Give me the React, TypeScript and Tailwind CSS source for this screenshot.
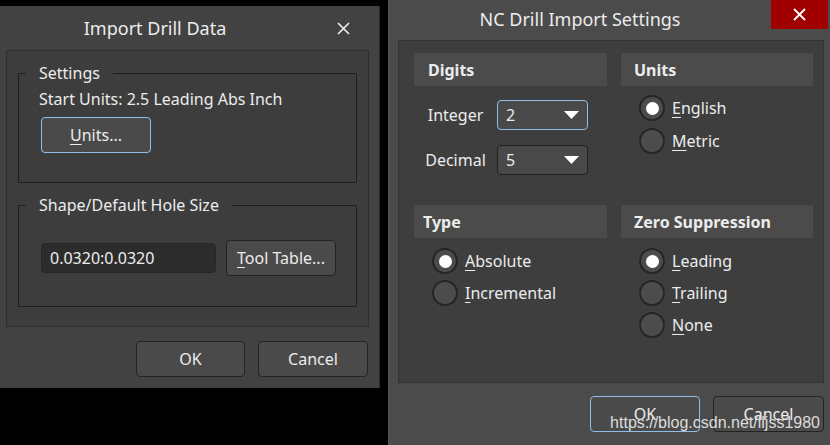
import React from 'react';

const font = { fontFamily: '"Noto Sans", "Open Sans", sans-serif' };

function Btn({ children, w, focus }: { children: React.ReactNode; w: string; focus?: boolean }) {
  return (
    <button
      className={`${w} h-[36px] rounded-[4px] bg-[#4a4a4a] text-[16px] text-[#ececec] border ${
        focus ? 'border-[#8fbde6]' : 'border-[#232323]'
      }`}
    >
      {children}
    </button>
  );
}

// mnemonic: first letter underlined
function Mn({ k, rest }: { k: string; rest: string }) {
  return (
    <span>
      <span className="underline underline-offset-[3px]">{k}</span>
      {rest}
    </span>
  );
}

function Radio({ checked, k, rest }: { checked?: boolean; k: string; rest: string }) {
  return (
    <div className="flex items-center gap-[7px] h-[26px]">
      <span className="w-[26px] h-[26px] rounded-full border-2 border-[#252525] bg-[#4c4c4c] flex items-center justify-center">
        {checked && <span className="w-[13px] h-[13px] rounded-full bg-white" />}
      </span>
      <span className="text-[16px] leading-[22px]">
        <Mn k={k} rest={rest} />
      </span>
    </div>
  );
}

function Dropdown({ value, focus }: { value: string; focus?: boolean }) {
  return (
    <div
      className={`w-[91px] h-[30px] rounded-[4px] bg-[#494949] border flex items-center justify-between pl-[8px] pr-[8px] ${
        focus ? 'border-[#8fbde6]' : 'border-[#222]'
      }`}
    >
      <span className="text-[16px]">{value}</span>
      <svg width="15" height="8" viewBox="0 0 15 8">
        <path d="M0 0 L15 0 L7.5 8 Z" fill="#fff" />
      </svg>
    </div>
  );
}

function Header({ title, pl }: { title: string; pl: string }) {
  return (
    <div className={`h-[33px] bg-[#4b4b4b] flex items-center ${pl} font-bold text-[16px]`}>{title}</div>
  );
}

function ImportDrillData() {
  return (
    <div className="mt-[6px] w-[380px] h-[382px] bg-[#424242] border-r border-[#2c2c2c] flex flex-col">
      <div className="h-[44px] flex items-center">
        <span className="w-[310px] text-center text-[18px]">Import Drill Data</span>
        <svg className="ml-[27px]" width="13" height="13" viewBox="0 0 13 13">
          <path d="M1 1 L12 12 M12 1 L1 12" stroke="#f0f0f0" strokeWidth="1.6" />
        </svg>
      </div>
      <div className="ml-[6px] w-[363px] h-[277px] bg-[#3d3d3d] border border-[#2e2e2e] pl-[11px] flex flex-col">
        <fieldset className="mt-[11px] w-[339px] h-[121px] border border-[#1f1f1f] pl-[20px]">
          <legend className="-ml-[13px] px-[13px] text-[16px] leading-[22px]">Settings</legend>
          <div className="text-[16px] leading-[22px] mt-[4px]">Start Units: 2.5 Leading Abs Inch</div>
          <div className="mt-[7px] pl-[2px]">
            <Btn w="w-[110px]" focus>
              <Mn k="U" rest="nits..." />
            </Btn>
          </div>
        </fieldset>
        <fieldset className="mt-[11px] w-[339px] h-[113px] border border-[#1f1f1f] pl-[22px]">
          <legend className="-ml-[15px] px-[13px] text-[16px] leading-[22px]">Shape/Default Hole Size</legend>
          <div className="mt-[24px] flex items-center gap-[10px]">
            <div className="w-[175px] h-[30px] rounded-[4px] bg-[#2c2c2c] border border-[#262626] flex items-center pl-[8px] text-[16px]">
              0.0320:0.0320
            </div>
            <Btn w="w-[110px]">
              <Mn k="T" rest="ool Table..." />
            </Btn>
          </div>
        </fieldset>
      </div>
      <div className="mt-[14px] flex justify-end gap-[13px] pr-[11px]">
        <Btn w="w-[109px]">OK</Btn>
        <Btn w="w-[110px]">Cancel</Btn>
      </div>
    </div>
  );
}

function NCDrillImportSettings() {
  return (
    <div className="w-[442px] h-[445px] bg-[#4b4b4b] border-l border-[#555] flex flex-col">
      <div className="h-[40px] flex items-start">
        <span className="flex-1 text-center text-[18px] pt-[6px]">NC Drill Import Settings</span>
        <div className="w-[57px] h-[29px] bg-[#a00000] mr-[2px] flex items-center justify-center">
          <svg width="13" height="13" viewBox="0 0 13 13">
            <path d="M1 1 L12 12 M12 1 L1 12" stroke="#fff" strokeWidth="1.8" />
          </svg>
        </div>
      </div>
      <div className="ml-[9px] w-[426px] h-[343px] bg-[#3e3e3e] border border-[#333] pt-[12px] pl-[15px]">
        <div className="grid grid-cols-[193px_192px] gap-x-[14px] gap-y-[30px]">
          <div>
            <Header title="Digits" pl="pl-[14px]" />
            <div className="mt-[14px] flex items-center h-[30px]">
              <span className="w-[83px] text-center text-[16px]">Integer</span>
              <Dropdown value="2" focus />
            </div>
            <div className="mt-[15px] flex items-center h-[30px]">
              <span className="w-[83px] text-center text-[16px]">Decimal</span>
              <Dropdown value="5" />
            </div>
          </div>
          <div>
            <Header title="Units" pl="pl-[13px]" />
            <div className="mt-[9px] pl-[18px] flex flex-col gap-[7px]">
              <Radio checked k="E" rest="nglish" />
              <Radio k="M" rest="etric" />
            </div>
          </div>
          <div>
            <Header title="Type" pl="pl-[9px]" />
            <div className="mt-[10px] pl-[18px] flex flex-col gap-[6px]">
              <Radio checked k="A" rest="bsolute" />
              <Radio k="I" rest="ncremental" />
            </div>
          </div>
          <div>
            <Header title="Zero Suppression" pl="pl-[13px]" />
            <div className="mt-[10px] pl-[18px] flex flex-col gap-[6px]">
              <Radio checked k="L" rest="eading" />
              <Radio k="T" rest="railing" />
              <Radio k="N" rest="one" />
            </div>
          </div>
        </div>
      </div>
      <div className="mt-[13px] flex justify-end gap-[13px] pr-[6px]">
        <Btn w="w-[110px]" focus>OK</Btn>
        <Btn w="w-[111px]">Cancel</Btn>
      </div>
    </div>
  );
}

export default function App() {
  return (
    <div className="relative w-[830px] h-[445px] bg-black flex gap-[8px] overflow-hidden text-[#ececec]" style={font}>
      <ImportDrillData />
      <NCDrillImportSettings />
      <span
        className="absolute right-[10px] bottom-[10px] text-[16px] text-[#dcdcdc]"
        style={{ fontFamily: '"Liberation Sans", Arial, sans-serif' }}
      >
        https://blog.csdn.net/lljss1980
      </span>
    </div>
  );
}
